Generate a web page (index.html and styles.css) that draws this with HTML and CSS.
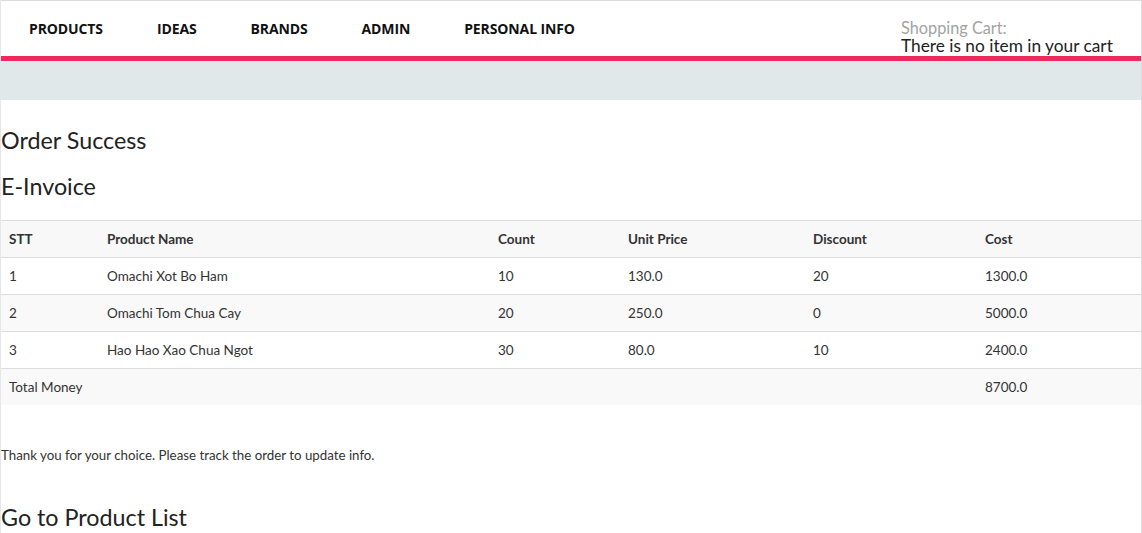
FILE: index.html
```html
<!DOCTYPE html>
<html lang="en">
<head>
<meta charset="utf-8">
<title>Order Success</title>
<link rel="stylesheet" href="styles.css">
</head>
<body>
<div class="page">
  <header class="header">
    <nav class="nav">
      <a class="nav-link" href="#">PRODUCTS</a>
      <a class="nav-link" href="#">IDEAS</a>
      <a class="nav-link" href="#">BRANDS</a>
      <a class="nav-link" href="#">ADMIN</a>
      <a class="nav-link" href="#">PERSONAL INFO</a>
    </nav>
    <div class="cart">
      <div class="cart-label">Shopping Cart:</div>
      <div class="cart-text">There is no item in your cart</div>
    </div>
  </header>
  <div class="band"></div>
  <main class="content">
    <h2 class="title">Order Success</h2>
    <h2 class="title">E-Invoice</h2>
    <table class="invoice">
      <thead>
        <tr><th class="c-stt">STT</th><th class="c-name">Product Name</th><th class="c-count">Count</th><th class="c-price">Unit Price</th><th class="c-disc">Discount</th><th>Cost</th></tr>
      </thead>
      <tbody>
        <tr><td>1</td><td>Omachi Xot Bo Ham</td><td>10</td><td>130.0</td><td>20</td><td>1300.0</td></tr>
        <tr class="alt"><td>2</td><td>Omachi Tom Chua Cay</td><td>20</td><td>250.0</td><td>0</td><td>5000.0</td></tr>
        <tr><td>3</td><td>Hao Hao Xao Chua Ngot</td><td>30</td><td>80.0</td><td>10</td><td>2400.0</td></tr>
        <tr class="alt"><td colspan="5">Total Money</td><td>8700.0</td></tr>
      </tbody>
    </table>
    <p class="note">Thank you for your choice. Please track the order to update info.</p>
    <h2 class="title link-title">Go to Product List</h2>
  </main>
</div>
</body>
</html>
```
FILE: styles.css
```css
html, body {
  margin: 0;
  padding: 0;
  background: #fff;
}
body {
  font-family: "Lato", "Open Sans", sans-serif;
  color: #333;
}
.page {
  border-left: 1px solid #e1e8ea;
  border-right: 1px solid #dcdcdc;
  min-height: 533px;
}
.header {
  display: flex;
  justify-content: space-between;
  align-items: stretch;
  border-top: 1px solid #dcdcdc;
  border-bottom: 5px solid #ef285e;
  box-sizing: border-box;
  height: 61px;
}
.nav {
  display: flex;
  align-items: center;
  padding-left: 1px;
}
.nav-link {
  font-family: "Open Sans", sans-serif;
  font-weight: 700;
  font-size: 14px;
  color: #111;
  text-decoration: none;
  padding: 0 27px;
  letter-spacing: -0.12px;
}
.cart {
  display: flex;
  flex-direction: column;
  justify-content: flex-end;
  padding: 0 27px 0 0;
  width: 213px;
}
.cart-label {
  color: #a3a3a3;
  font-size: 16.3px;
  line-height: 18px;
}
.cart-text {
  color: #222;
  font-size: 17.3px;
  line-height: 18px;
  margin-bottom: 1px;
}
.band {
  height: 39px;
  background: #e1e8ea;
}
.title {
  font-weight: 400;
  font-size: 23.3px;
  line-height: 28px;
  margin: 26px 0 0 0;
  color: #222;
}
.title + .title {
  margin-top: 18px;
}
.invoice {
  width: 100%;
  border-collapse: collapse;
  margin-top: 20px;
  font-size: 13.5px;
}
.invoice th, .invoice td {
  text-align: left;
  padding: 0 8px;
  height: 36px;
  border-top: 1px solid #dddddd;
}
.invoice th {
  font-weight: 700;
  background: #f8f8f8;
}
.invoice tr.alt td {
  background: #f9f9f9;
}
.c-stt { width: 82px; }
.c-name { width: 375px; }
.c-count { width: 114px; }
.c-price { width: 169px; }
.c-disc { width: 156px; }
.note {
  font-size: 13.3px;
  margin: 41px 0 0 0;
  line-height: 18px;
}
.link-title {
  margin-top: 39px;
}
```
